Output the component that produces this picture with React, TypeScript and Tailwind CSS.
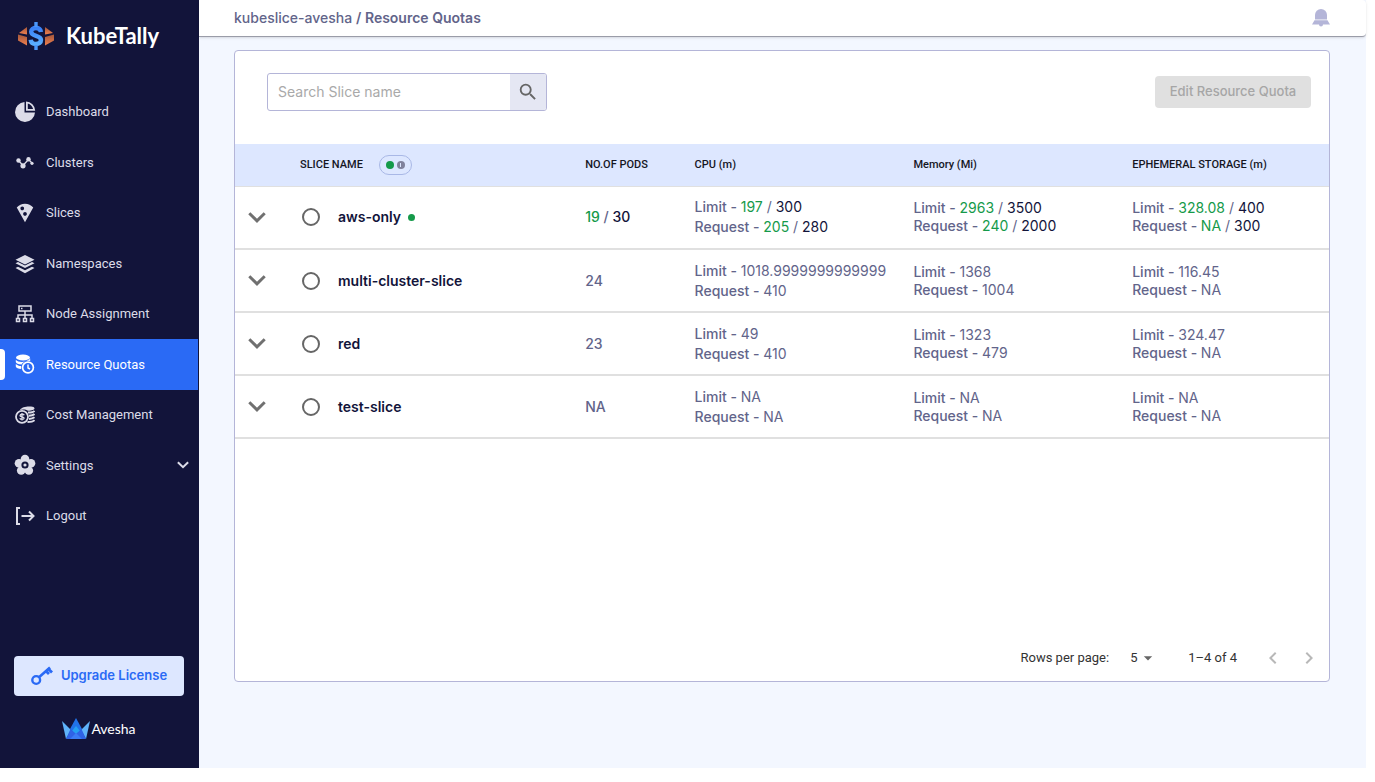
import { useState, type ReactNode } from "react";
import clsx from "clsx";
import {
  MdArrowDropDown,
  MdChevronLeft,
  MdChevronRight,
  MdLocalPizza,
  MdSearch,
} from "react-icons/md";

interface Quota {
  used: string;
  total?: string;
}

interface Resource {
  limit: Quota;
  request: Quota;
}

interface Slice {
  name: string;
  hasQuota?: boolean;
  pods: Quota;
  cpu: Resource;
  memory: Resource;
  storage: Resource;
}

const slices: Slice[] = [
  {
    name: "aws-only",
    hasQuota: true,
    pods: { used: "19", total: "30" },
    cpu: {
      limit: { used: "197", total: "300" },
      request: { used: "205", total: "280" },
    },
    memory: {
      limit: { used: "2963", total: "3500" },
      request: { used: "240", total: "2000" },
    },
    storage: {
      limit: { used: "328.08", total: "400" },
      request: { used: "NA", total: "300" },
    },
  },
  {
    name: "multi-cluster-slice",
    pods: { used: "24" },
    cpu: { limit: { used: "1018.9999999999999" }, request: { used: "410" } },
    memory: { limit: { used: "1368" }, request: { used: "1004" } },
    storage: { limit: { used: "116.45" }, request: { used: "NA" } },
  },
  {
    name: "red",
    pods: { used: "23" },
    cpu: { limit: { used: "49" }, request: { used: "410" } },
    memory: { limit: { used: "1323" }, request: { used: "479" } },
    storage: { limit: { used: "324.47" }, request: { used: "NA" } },
  },
  {
    name: "test-slice",
    pods: { used: "NA" },
    cpu: { limit: { used: "NA" }, request: { used: "NA" } },
    memory: { limit: { used: "NA" }, request: { used: "NA" } },
    storage: { limit: { used: "NA" }, request: { used: "NA" } },
  },
];

function KubeTallyLogo() {
  return (
    <svg width="38" height="28" viewBox="0 0 38 28" aria-hidden="true">
      <defs>
        <linearGradient id="dollar" x1="0" y1="0" x2="0" y2="1">
          <stop offset="0" stopColor="#3b82f6" />
          <stop offset="1" stopColor="#5aaeff" />
        </linearGradient>
        <linearGradient id="copper" x1="0" y1="0" x2="0" y2="1">
          <stop offset="0" stopColor="#a2573c" />
          <stop offset="1" stopColor="#f0804f" />
        </linearGradient>
      </defs>
      <g fill="url(#copper)">
        <path d="M10 5v7.500L2 11z" />
        <path d="M1 12.500l9 2.500v8.500l-9-5z" />
        <path d="M28 5v7.500l8-1.500z" />
        <path d="M37 12.500l-9 2.500v8.500l9-5z" />
      </g>
      <path
        d="M24 10C23.500 7 21.500 6 19 6c-3 0-4.800 1.400-4.800 3.800C14.200 15 24 12.700 24 18c0 2.600-2.100 4-5 4-3.200 0-5-1.600-5.300-4.300"
        fill="none"
        stroke="url(#dollar)"
        strokeWidth="4.400"
      />
      <path d="M17.300 0h3.400v5h-3.400zM17.300 23h3.400v5h-3.400z" fill="#4b98fb" />
    </svg>
  );
}

function AveshaLogo() {
  return (
    <svg width="28" height="22" viewBox="0 0 28 22" aria-hidden="true">
      <path d="M0 3l9 9-5 9z" fill="#5fb4fb" />
      <path d="M28 3l-9 9 5 9z" fill="#5fb4fb" />
      <path d="M14 0l6 11-6 6-6-6z" fill="#2173e8" />
      <path d="M14 8l4 5-4 3-4-3z" fill="#25a0f2" />
      <path d="M8.500 11L14 16l-4.500 5H4z" fill="#2f63e6" />
      <path d="M19.500 11L14 16l4.500 5H24z" fill="#2f63e6" />
      <path d="M14 15l6 6H8z" fill="#3b7cf5" />
    </svg>
  );
}

function PieIcon() {
  return (
    <svg width="22" height="22" viewBox="0 0 22 22" fill="currentColor">
      <path d="M10.500 1A10 10 0 1 0 21 11.500H10.500z" />
      <path
        fillRule="evenodd"
        d="M12 0.500a9.500 9.500 0 0 1 9.200 9.200H12zM13.800 2.600v5.300h5.300a8 8 0 0 0-5.300-5.300z"
      />
    </svg>
  );
}

function ClustersIcon() {
  return (
    <svg width="18" height="12" viewBox="0 0 18 12" fill="currentColor">
      <path
        d="M2.500 3.500L7 8.500l5.500-6 3.500 3.500"
        fill="none"
        stroke="currentColor"
        strokeWidth="1.300"
      />
      <circle cx="2.500" cy="3.500" r="2.200" />
      <circle cx="7" cy="8.800" r="2.600" />
      <circle cx="12.500" cy="2.300" r="2.200" />
      <circle cx="16" cy="6.300" r="1.600" />
    </svg>
  );
}

function LayersIcon() {
  return (
    <svg width="20" height="20" viewBox="0 0 20 20" fill="currentColor">
      <path d="M10 1l9.500 4.700L10 10.400.5 5.700z" />
      <path d="M.5 9.200l2.500-1.100 7 3.500 7-3.500 2.500 1.100-9.500 4.900z" />
      <path d="M.5 14l2.500-1.300 7 3.600 7-3.600 2.500 1.300-9.500 5.200z" />
    </svg>
  );
}

function NodesIcon() {
  return (
    <svg
      width="20"
      height="20"
      viewBox="0 0 20 20"
      fill="none"
      stroke="currentColor"
      strokeWidth="1.500"
    >
      <path d="M4 2h12v5H4zM6 4.500h1.500M10 7v7M3 14v-3h14v3" />
      <path d="M1.500 14.500h3v3h-3zM8.500 14.500h3v3h-3zM15.500 14.500h3v3h-3z" />
    </svg>
  );
}

function QuotaIcon() {
  return (
    <svg width="20" height="20" viewBox="0 0 20 20" fill="currentColor">
      <ellipse cx="8" cy="3.500" rx="7" ry="3" />
      <path d="M.8 5.800C2.500 8 7 8.500 10 7.600 8 8.500 7 9.500 6.600 10.600 3.500 10.500 1 9.500.8 8z" />
      <path d="M.8 10c1.200 1.300 3.200 2 5.400 2.100v2.800C3.500 14.900 1 13.900.8 12.400z" />
      <path d="M11 6.600c1.900-.2 3.700-1 4.200-2v2.300z" />
      <circle
        cx="13"
        cy="13.500"
        r="5.400"
        fill="none"
        stroke="currentColor"
        strokeWidth="1.700"
      />
      <path
        d="M13 10.500v3.500l2 1"
        fill="none"
        stroke="currentColor"
        strokeWidth="1.400"
      />
    </svg>
  );
}

function CostIcon() {
  return (
    <svg
      width="20"
      height="18"
      viewBox="0 0 20 18"
      fill="none"
      stroke="currentColor"
    >
      <path
        d="M5 4C6.500 1 12 .2 16 .6c2 .2 3.500.8 3.500 1.900s-2.500 2.200-6.500 2.300C11 3.500 8 3 5 4z"
        fill="currentColor"
        stroke="none"
      />
      <path
        d="M13 6.600c3 0 5.500-.6 6.500-1.800M14 9.800c2.500-.1 4.500-.8 5.500-1.800M14 13c2.500-.1 4.500-.8 5.500-1.800M12.500 16c3 0 6-.6 7-1.900"
        strokeWidth="2"
      />
      <circle cx="7" cy="10.800" r="6" strokeWidth="1.800" />
      <path
        d="M9.200 9.200C8.800 8 5.200 7.800 5 9.500c-.2 1.800 4.200.9 4.100 2.800-.1 1.500-3.700 1.500-4.300 0M7 7v7.600"
        strokeWidth="1.300"
      />
    </svg>
  );
}

function FlowerIcon() {
  return (
    <svg width="22" height="22" viewBox="0 0 22 22" fill="currentColor">
      <circle cx="11" cy="5" r="4.300" />
      <circle cx="17" cy="9.300" r="4.300" />
      <circle cx="14.800" cy="16.500" r="4.300" />
      <circle cx="7.200" cy="16.500" r="4.300" />
      <circle cx="5" cy="9.300" r="4.300" />
      <circle cx="11" cy="11" r="6.500" />
      <circle
        cx="11"
        cy="11"
        r="2.600"
        fill="none"
        stroke="#12143a"
        strokeWidth="2"
      />
    </svg>
  );
}

function LogoutIcon() {
  return (
    <svg
      width="20"
      height="18"
      viewBox="0 0 20 18"
      fill="none"
      stroke="currentColor"
      strokeWidth="2"
    >
      <path d="M5 1H2v16h3M6.500 9H18M14 4.500L18.500 9 14 13.500" />
    </svg>
  );
}

function KeyIcon() {
  return (
    <svg
      width="22"
      height="20"
      viewBox="0 0 22 20"
      fill="none"
      stroke="currentColor"
    >
      <circle cx="5.200" cy="14" r="3.900" strokeWidth="2.400" />
      <path d="M8 11.300L19 1.500" strokeWidth="2.600" />
      <path d="M14.500 4.500l3.500 3.600M17 2.500l4 4" strokeWidth="2.800" />
    </svg>
  );
}

function BellIcon() {
  return (
    <svg width="18" height="18" viewBox="0 0 18 18" fill="currentColor">
      <path d="M9 0a6 6 0 0 1 6 6v4.500H3V6a6 6 0 0 1 6-6z" />
      <path d="M2.500 11.300h13L18 15.500h-7a2 2 0 0 1-4 0H0z" />
    </svg>
  );
}

function Chevron({ small }: { small?: boolean }) {
  return (
    <svg
      width={small ? 12 : 18}
      height={small ? 8 : 11}
      viewBox="0 0 18 11"
      fill="none"
      stroke="currentColor"
      strokeWidth="3"
      aria-hidden="true"
    >
      <path d="M1.300 1.300L9 8.800l7.700-7.500" />
    </svg>
  );
}

interface NavEntry {
  label: string;
  icon: ReactNode;
  active?: boolean;
  expandable?: boolean;
}

const navEntries: NavEntry[] = [
  { label: "Dashboard", icon: <PieIcon /> },
  { label: "Clusters", icon: <ClustersIcon /> },
  { label: "Slices", icon: <MdLocalPizza size={22} /> },
  { label: "Namespaces", icon: <LayersIcon /> },
  { label: "Node Assignment", icon: <NodesIcon /> },
  { label: "Resource Quotas", icon: <QuotaIcon />, active: true },
  { label: "Cost Management", icon: <CostIcon /> },
  { label: "Settings", icon: <FlowerIcon />, expandable: true },
  { label: "Logout", icon: <LogoutIcon /> },
];

function Sidebar() {
  return (
    <aside className="flex w-[199px] shrink-0 flex-col bg-[#12143a]">
      <div className="flex items-center gap-[11px] pt-[22px] pr-4 pb-[37px] pl-[17px] text-white">
        <KubeTallyLogo />
        <span className="font-['Lato'] text-[22px] leading-7 font-bold">
          KubeTally
        </span>
      </div>
      <nav className="mr-px grid min-h-[454px] auto-rows-fr font-['Roboto'] text-[13px]">
        {navEntries.map((entry) => (
          <a
            key={entry.label}
            href="#"
            className={clsx(
              "relative flex items-center gap-[10px] pr-[9px] pl-[14px]",
              entry.active ? "bg-[#2a6af5] text-white" : "text-[#dcdce8]",
            )}
          >
            {entry.active && (
              <span className="absolute left-0 h-[31px] w-[5px] rounded-r bg-white" />
            )}
            <span className="flex w-[22px] justify-center">{entry.icon}</span>
            <span className="grow">{entry.label}</span>
            {entry.expandable && <Chevron small />}
          </a>
        ))}
      </nav>
      <div className="mt-auto flex flex-col items-center pr-[15px] pb-7 pl-[14px]">
        <button
          type="button"
          className="flex h-10 w-full items-center justify-center gap-2 rounded bg-[#dde7ff] text-[13px] font-semibold text-[#2a6af5]"
        >
          <KeyIcon />
          Upgrade License
        </button>
        <div className="mt-[22px] flex items-center gap-px text-white">
          <AveshaLogo />
          <span className="font-['Lato'] text-sm">Avesha</span>
        </div>
      </div>
    </aside>
  );
}

function Value({ quota }: { quota: Quota }) {
  if (!quota.total) return <>{quota.used}</>;
  return (
    <>
      <span className="text-[#159a4a]">{quota.used}</span> /{" "}
      <span className="text-[#12143a]">{quota.total}</span>
    </>
  );
}

function ResourceCell({
  resource,
  tight,
}: {
  resource: Resource;
  tight?: boolean;
}) {
  return (
    <td
      className={clsx(
        "pl-[22px] whitespace-nowrap",
        tight ? "leading-[18px]" : "leading-5",
      )}
    >
      <div>
        <span className="font-medium">Limit - </span>
        <Value quota={resource.limit} />
      </div>
      <div>
        <span className="font-medium">Request - </span>
        <Value quota={resource.request} />
      </div>
    </td>
  );
}

function QuotaTable() {
  const [selected, setSelected] = useState("");

  return (
    <table className="w-full table-fixed text-left text-sm text-[#62648a]">
      <thead>
        <tr className="h-[42px] border-b border-[#e0e0e0] bg-[#dde7ff] font-['Roboto'] text-[11px] text-[#15161f]">
          <th className="w-[44px]" />
          <th className="pl-[21px] font-medium">
            <div className="flex items-center gap-4">
              SLICE NAME
              <span className="flex h-5 w-[33px] items-center justify-center gap-[3px] rounded-full border border-[#a9b8e6]">
                <span className="size-2 rounded-full bg-[#159a4a]" />
                <span className="flex size-2 items-center justify-center rounded-full bg-[#80829c]">
                  <span className="h-1 w-px bg-[#dde7ff]" />
                </span>
              </span>
            </div>
          </th>
          <th className="w-[10%] pl-[22px] font-medium">NO.OF PODS</th>
          <th className="w-[20%] pl-[22px] font-medium">CPU (m)</th>
          <th className="w-[20%] pl-[22px] font-medium">Memory (Mi)</th>
          <th className="w-[20%] pl-[22px] font-medium">
            EPHEMERAL STORAGE (m)
          </th>
        </tr>
      </thead>
      <tbody>
        {slices.map((slice) => (
          <tr key={slice.name} className="h-[63px] border-b-2 border-[#e0e0e0]">
            <td>
              <button
                type="button"
                aria-label={`Expand ${slice.name}`}
                className="mx-auto block text-[#707070]"
              >
                <Chevron />
              </button>
            </td>
            <td className="pl-[23px]">
              <label className="flex items-center font-semibold text-[#12143a]">
                <input
                  type="radio"
                  name="slice"
                  value={slice.name}
                  checked={selected === slice.name}
                  onChange={() => setSelected(slice.name)}
                  className="mr-[18px] size-[18px] appearance-none rounded-full border-2 border-[#666] checked:border-[#2a6af5]"
                />
                {slice.name}
                {slice.hasQuota && (
                  <span className="ml-[7px] size-[7px] rounded-full bg-[#159a4a]" />
                )}
              </label>
            </td>
            <td className="pl-[22px] font-medium">
              <Value quota={slice.pods} />
            </td>
            <ResourceCell resource={slice.cpu} />
            <ResourceCell resource={slice.memory} tight />
            <ResourceCell resource={slice.storage} tight />
          </tr>
        ))}
      </tbody>
    </table>
  );
}

function Pagination() {
  return (
    <div className="mt-auto flex items-center justify-end pr-2 pb-[11px] font-['Roboto'] text-[13px] text-[#333]">
      <label htmlFor="rows">Rows per page:</label>
      <div className="relative ml-[21px] flex items-center">
        <select
          id="rows"
          defaultValue="5"
          className="h-6 w-[28px] appearance-none bg-transparent outline-none"
        >
          <option>5</option>
          <option>10</option>
        </select>
        <MdArrowDropDown
          size={20}
          className="pointer-events-none absolute left-2 text-[#666]"
        />
      </div>
      <span className="ml-[30px]">1–4 of 4</span>
      <div className="ml-6 flex gap-3 text-[#b8b8b8]">
        <button type="button" disabled aria-label="Previous page">
          <MdChevronLeft size={24} />
        </button>
        <button type="button" disabled aria-label="Next page">
          <MdChevronRight size={24} />
        </button>
      </div>
    </div>
  );
}

export default function App() {
  return (
    <div className="min-h-screen bg-white pr-[9px] pb-[14px] font-['Inter',sans-serif]">
      <div className="flex min-h-[calc(100vh-14px)] bg-[#f3f7ff]">
        <Sidebar />
        <div className="flex min-w-0 grow flex-col">
          <header className="flex h-[37px] items-center justify-between rounded-r border-b border-[#9a9ca8] bg-white pr-9 pl-[35px] text-sm text-[#62648a] shadow-sm">
            <div>
              <a href="#" className="font-medium">
                kubeslice-avesha
              </a>{" "}
              <span className="font-semibold">/ Resource Quotas</span>
            </div>
            <button
              type="button"
              aria-label="Notifications"
              className="text-[#b4b5d8]"
            >
              <BellIcon />
            </button>
          </header>
          <main className="flex grow flex-col pt-[13px] pr-9 pb-[86px] pl-[35px]">
            <section className="flex grow flex-col rounded border border-[#b4b5d8] bg-white">
              <div className="flex items-center justify-between pt-[22px] pr-[18px] pb-[33px] pl-8">
                <form className="flex h-[38px] w-[280px] overflow-hidden rounded-[3px] border border-[#b4b5d8]">
                  <input
                    type="text"
                    aria-label="Search Slice name"
                    placeholder="Search Slice name"
                    className="min-w-0 grow px-[10px] text-sm outline-none placeholder:text-[#a9a9a9]"
                  />
                  <button
                    type="button"
                    aria-label="Search"
                    className="flex w-9 items-center justify-center bg-[#e5e7f3] text-[#666]"
                  >
                    <MdSearch size={22} />
                  </button>
                </form>
                <button
                  type="button"
                  disabled
                  className="h-8 w-[156px] rounded bg-[#e0e0e0] text-[13px] font-medium text-[#a6a6a6]"
                >
                  Edit Resource Quota
                </button>
              </div>
              <QuotaTable />
              <Pagination />
            </section>
          </main>
        </div>
      </div>
    </div>
  );
}
